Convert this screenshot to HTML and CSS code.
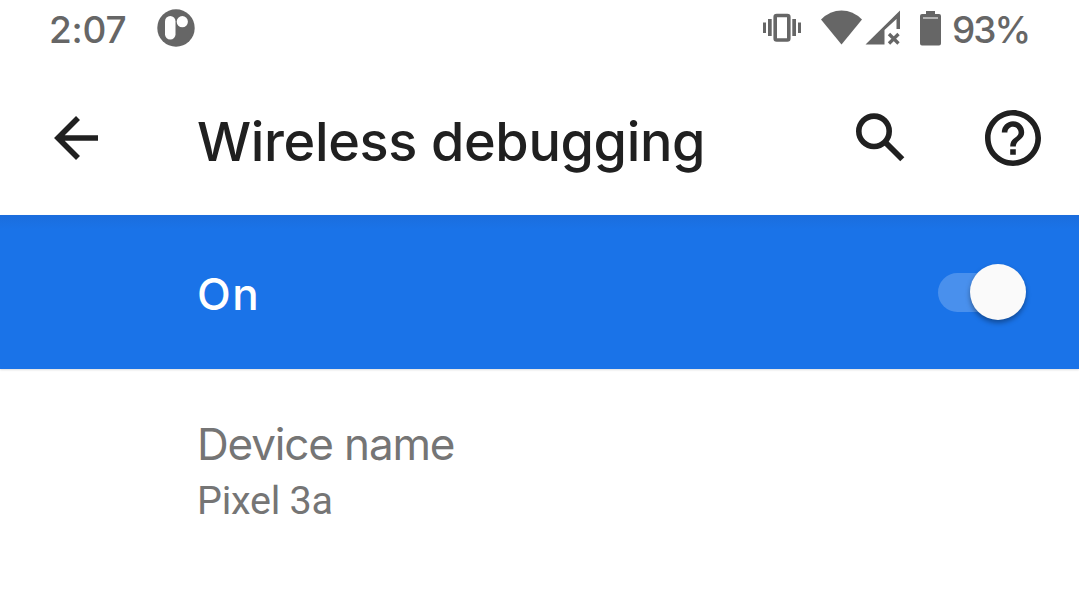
FILE: index.html
```html
<!DOCTYPE html>
<html lang="en">
<head>
<meta charset="utf-8">
<title>Wireless debugging</title>
<link rel="stylesheet" href="styles.css">
</head>
<body>
<header class="status">
  <span class="clock">2:07</span>
  <svg class="badge" viewBox="0 0 38 38"><circle cx="19" cy="19" r="18.7" fill="#666"/><rect x="8" y="7" width="10.5" height="23.5" rx="5.2" fill="#fff"/><circle cx="25.3" cy="12.7" r="5.6" fill="#fff"/></svg>
  <svg class="system" viewBox="760 0 184 60" fill="#666">
    <path d="M763 22.5h3v10.5h-3zM768 19h3.7v17H768zM792.3 19h3.7v17h-3.7zM798 22.5h3v10.5h-3z"/>
    <rect x="775.2" y="15.5" width="13.6" height="24.5" rx="1.5" fill="none" stroke="#666" stroke-width="3.6"/>
    <path d="M821 19.5Q830 10.5 841.5 10.5T862 19.5L841.5 44.5z"/>
    <path fill-rule="evenodd" d="M865.5 44.5L900 10.5V29H896.5V19L884.5 30V44.5z"/>
    <path d="M889 34l9.5 9.5M898.5 34l-9.5 9.5" fill="none" stroke="#666" stroke-width="3.3"/>
    <path d="M926 11h9v3h4q2 0 2 2v27.500q0 2-2 2h-17q-2 0-2-2V16q0-2 2-2h4z"/>
    <path d="M923 18h15" stroke="#ddd" stroke-width="1.3"/>
  </svg>
  <span class="level">93%</span>
</header>
<nav class="toolbar">
  <svg class="back" viewBox="0 0 46 46" fill="none" stroke="#202020" stroke-width="5.6"><path d="M24 3L4 23L24 43M4 23H44"/></svg>
  <h1 class="title">Wireless debugging</h1>
  <svg class="search" viewBox="0 0 50 50" fill="none" stroke="#202020"><circle cx="18" cy="18.3" r="15.2" stroke-width="5.6"/><path d="M29 29L46.300 46.300" stroke-width="5.8"/></svg>
  <svg class="help" viewBox="2 2 20 20" fill="#202020"><path d="M11 18h2v-2h-2v2zm1-16C6.480 2 2 6.480 2 12s4.480 10 10 10 10-4.480 10-10S17.520 2 12 2zm0 18c-4.410 0-8-3.590-8-8s3.590-8 8-8 8 3.590 8 8-3.590 8-8 8zm0-14c-2.210 0-4 1.790-4 4h2c0-1.100.900-2 2-2s2 .900 2 2c0 2-3 1.750-3 5h2c0-2.250 3-2.500 3-5 0-2.210-1.790-4-4-4z"/></svg>
</nav>
<section class="banner">
  <span class="state">On</span>
  <span class="switch"><span class="thumb"></span></span>
</section>
<main class="device">
  <div class="label"><span>Device name</span></div>
  <div class="value"><span>Pixel 3a</span></div>
</main>
</body>
</html>
```
FILE: styles.css
```css
* { box-sizing: border-box; }
body { margin: 0; width: 1079px; height: 597px; overflow: hidden; background: #fff; font-family: Inter, sans-serif; white-space: nowrap; }
svg { display: block; flex: none; }
.status { display: flex; height: 60px; padding-left: 49px; color: #666; font-size: 37px; font-weight: 500; line-height: 60px; }
.clock { width: 108px; letter-spacing: -.2px; }
.badge { width: 38px; height: 38px; margin-top: 9px; }
.system { width: 184px; height: 60px; margin-left: 565px; }
.level { margin-left: 8px; letter-spacing: -2px; }
.toolbar { display: flex; height: 155px; padding-left: 54px; color: #202020; }
.back { width: 46px; height: 46px; margin-top: 55px; }
.title { width: 659px; margin: 51px 0 0 97px; font-size: 54px; font-weight: 500; line-height: 61px; letter-spacing: -.36px; }
.search { width: 50px; height: 50px; margin-top: 53px; }
.help { width: 56px; height: 56px; margin: 50px 0 0 79px; }
.banner { display: flex; align-items: center; justify-content: space-between; height: 154px; padding: 0 53px 0 197px; color: #fff; background: linear-gradient(#1b6ddd, #1a73e8 14px); box-shadow: 0 1px 2px #ddd; }
.state { font-size: 44px; font-weight: 500; line-height: 60px; padding-top: 3px; letter-spacing: 1.5px; }
.switch { display: flex; justify-content: flex-end; align-items: center; width: 88px; height: 39px; border-radius: 20px; background: linear-gradient(90deg, #4990ed 65px, transparent 65px); }
.thumb { width: 56px; height: 56px; border-radius: 50%; background: #fafafa; box-shadow: 0 3px 5px rgba(0, 0, 0, .35); }
.device { padding: 45px 0 0 197px; color: #757575; }
.label { height: 59px; font-size: 44px; line-height: 60px; letter-spacing: -1.15px; }
.value { height: 56px; font: 39.5px/56px Roboto, sans-serif; letter-spacing: -.25px; }
```
